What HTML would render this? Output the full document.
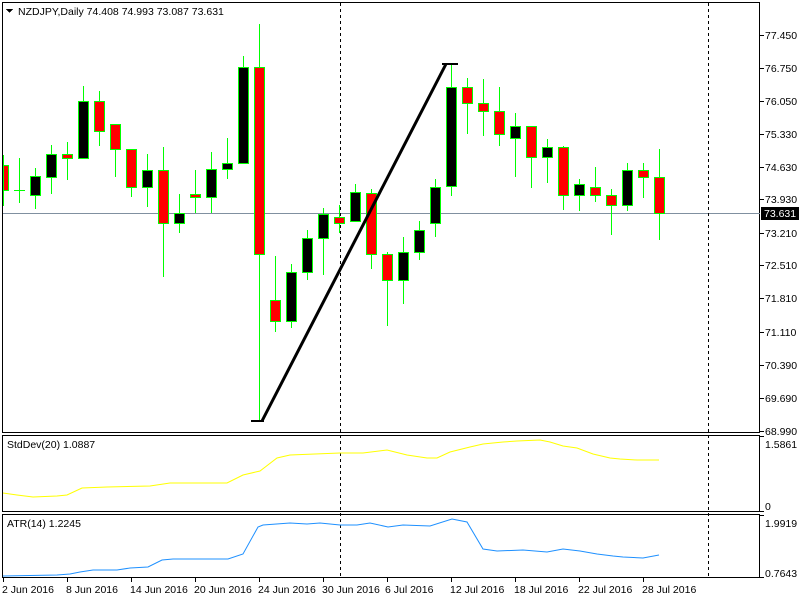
<!DOCTYPE html>
<html><head><meta charset="utf-8"><style>
html,body{margin:0;padding:0;background:#fff;width:800px;height:600px;overflow:hidden}
svg{display:block}
text{font-family:"Liberation Sans",sans-serif;font-size:10.5px;fill:#000}
</style></head><body>
<svg id="s" width="800" height="600" viewBox="0 0 800 600" xmlns="http://www.w3.org/2000/svg" shape-rendering="crispEdges">
<rect width="800" height="600" fill="#fff"/>
<rect x="2.5" y="2.5" width="757" height="430" fill="none" stroke="#000"/>
<rect x="2.5" y="435.5" width="757" height="76" fill="none" stroke="#000"/>
<rect x="2.5" y="514.5" width="757" height="63" fill="none" stroke="#000"/>
<line x1="3" y1="213.5" x2="760" y2="213.5" stroke="#8090a0"/>
<line x1="340.5" y1="3" x2="340.5" y2="578" stroke="#000" stroke-dasharray="3,3"/>
<line x1="708.5" y1="3" x2="708.5" y2="578" stroke="#000" stroke-dasharray="3,3"/>
<g id="candles"></g>
<g shape-rendering="auto">
<line x1="262" y1="421" x2="446" y2="64" stroke="#000" stroke-width="3"/>
<line x1="251" y1="421" x2="264" y2="421" stroke="#000" stroke-width="2"/>
<line x1="442" y1="64" x2="458" y2="64" stroke="#000" stroke-width="2"/>
<polyline fill="none" stroke="#ffff00" stroke-width="1" points="3,493 17,495 33,497 57,496 67,495 82,488 107,487 150,486 170,483 227,483 243,475 260,471 277,458 290,455 340,453 363,453 387,450 407,455 427,458 437,458 450,452 470,447 483,444 503,442 517,441 540,440 550,442 563,446 577,448 593,454 610,458 620,459 637,460 659,460"/>
<polyline fill="none" stroke="#1e90ff" stroke-width="1" points="3,576 57,575 70,574 80,572 93,570 117,570 130,568 148,567 162,560 173,559 228,559 243,554 258,527 263,525 290,523 307,524 320,523 340,525 357,525 370,523 388,527 403,525 430,526 452,519 467,522 483,549 497,551 523,550 547,552 563,549 580,551 597,554 613,556 623,557 643,558 659,555"/>
</g>
<polygon points="6,9 13,9 9.5,13" fill="#000"/>
<text x="18" y="15">NZDJPY,Daily  74.408 74.993 73.087 73.631</text>
<text x="7" y="448">StdDev(20) 1.0887</text>
<text x="7" y="527">ATR(14) 1.2245</text>
<g stroke="#000">
<line x1="760" y1="35.5" x2="764" y2="35.5"/><line x1="760" y1="68.5" x2="764" y2="68.5"/><line x1="760" y1="101.5" x2="764" y2="101.5"/><line x1="760" y1="134.5" x2="764" y2="134.5"/><line x1="760" y1="167.5" x2="764" y2="167.5"/><line x1="760" y1="199.5" x2="764" y2="199.5"/><line x1="760" y1="233.5" x2="764" y2="233.5"/><line x1="760" y1="265.5" x2="764" y2="265.5"/><line x1="760" y1="298.5" x2="764" y2="298.5"/><line x1="760" y1="332.5" x2="764" y2="332.5"/><line x1="760" y1="365.5" x2="764" y2="365.5"/><line x1="760" y1="398.5" x2="764" y2="398.5"/><line x1="760" y1="431.5" x2="764" y2="431.5"/>
<line x1="760" y1="436.5" x2="764" y2="436.5"/><line x1="760" y1="511.5" x2="764" y2="511.5"/><line x1="760" y1="515.5" x2="764" y2="515.5"/><line x1="760" y1="577.5" x2="764" y2="577.5"/>
</g>
<text x="765" y="39">77.450</text>
<text x="765" y="72">76.750</text>
<text x="765" y="105">76.050</text>
<text x="765" y="138">75.330</text>
<text x="765" y="171">74.630</text>
<text x="765" y="203">73.930</text>
<rect x="761" y="207" width="38" height="13" fill="#000"/>
<text x="764" y="217" style="fill:#fff">73.631</text>
<text x="765" y="237">73.210</text>
<text x="765" y="269">72.510</text>
<text x="765" y="302">71.810</text>
<text x="765" y="336">71.110</text>
<text x="765" y="369">70.390</text>
<text x="765" y="402">69.690</text>
<text x="765" y="435">68.990</text>
<text x="765" y="448">1.5861</text>
<text x="765" y="510">0</text>
<text x="765" y="527">1.9919</text>
<text x="765" y="577">0.7643</text>
<g stroke="#000">
<line x1="3.5" y1="578" x2="3.5" y2="582"/><line x1="67.5" y1="578" x2="67.5" y2="582"/><line x1="131.5" y1="578" x2="131.5" y2="582"/><line x1="195.5" y1="578" x2="195.5" y2="582"/><line x1="259.5" y1="578" x2="259.5" y2="582"/><line x1="323.5" y1="578" x2="323.5" y2="582"/><line x1="387.5" y1="578" x2="387.5" y2="582"/><line x1="451.5" y1="578" x2="451.5" y2="582"/><line x1="515.5" y1="578" x2="515.5" y2="582"/><line x1="579.5" y1="578" x2="579.5" y2="582"/><line x1="643.5" y1="578" x2="643.5" y2="582"/>
</g>
<text x="2" y="593">2 Jun 2016</text>
<text x="66" y="593">8 Jun 2016</text>
<text x="130" y="593">14 Jun 2016</text>
<text x="194" y="593">20 Jun 2016</text>
<text x="258" y="593">24 Jun 2016</text>
<text x="322" y="593">30 Jun 2016</text>
<text x="385" y="593">6 Jul 2016</text>
<text x="450" y="593">12 Jul 2016</text>
<text x="514" y="593">18 Jul 2016</text>
<text x="578" y="593">22 Jul 2016</text>
<text x="642" y="593">28 Jul 2016</text>
</svg>
<script>
var d=[
[0,165,190,155,205],[2,190,190,158,202],[1,176,195,168,208],[1,154,177,145,193],[0,154,158,142,179],
[1,101,158,86,158],[0,101,131,91,145],[0,124,149,124,176],[0,149,187,149,196],[1,170,187,154,206],
[0,170,223,147,276],[1,213,223,194,232],[0,194,197,170,212],[1,169,197,152,212],[1,163,169,138,178],
[1,67,163,56,163],[0,67,254,24,421],[0,300,321,256,331],[1,272,321,264,327],[1,238,272,230,279],
[1,214,238,208,274],[0,217,223,205,232],[1,192,221,184,221],[0,193,254,189,268],[0,254,280,252,325],
[1,252,280,237,303],[1,230,252,221,259],[1,187,223,179,236],[1,87,186,64,195],[0,87,103,78,133],
[0,103,111,79,135],[0,111,134,87,145],[1,126,138,113,176],[0,126,157,126,187],[1,147,157,139,182],
[0,147,195,146,209],[1,184,195,179,210],[0,187,195,167,201],[0,195,205,189,234],[1,170,205,163,210],
[0,170,177,163,197],[0,177,213,149,239]];
var g=document.getElementById('candles'),h='';
d.forEach(function(c,i){var x=3+16*i;
h+='<line x1="'+(x+.5)+'" y1="'+c[3]+'" x2="'+(x+.5)+'" y2="'+(c[4]+1)+'" stroke="#00ff00"/>';
if(c[0]==2){h+='<line x1="'+(x-5)+'" y1="'+(c[1]+.5)+'" x2="'+(x+6)+'" y2="'+(c[1]+.5)+'" stroke="#00ff00"/>';}
else{var x0=Math.max(x-4.5,3.5);h+='<rect x="'+x0+'" y="'+(c[1]+.5)+'" width="'+(x+5.5-x0)+'" height="'+Math.max(c[2]-c[1],2)+'" fill="'+(c[0]?'#000':'#ff0000')+'" stroke="#00ff00"/>';}
});
g.innerHTML=h;
</script>
</body></html>
